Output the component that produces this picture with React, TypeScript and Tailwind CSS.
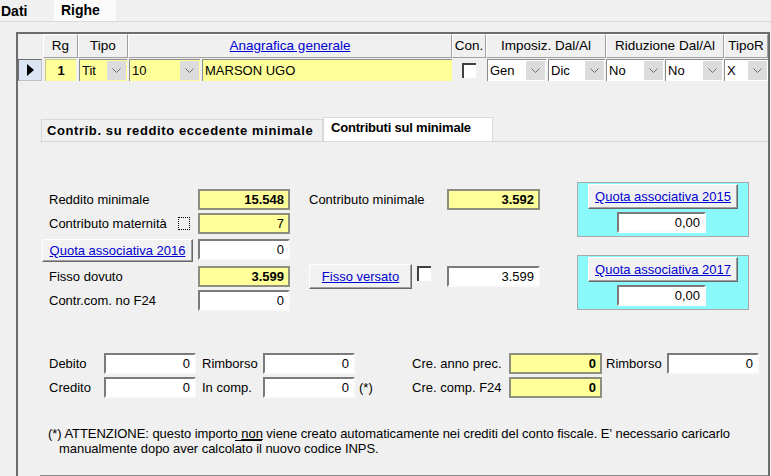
import clsx from "clsx";
import type { ReactNode } from "react";

function Chevron() {
  return (
    <svg width="9" height="5" viewBox="0 0 9 5" className="block">
      <path d="M0.5 0.5 L4.5 4.5 L8.5 0.5" fill="none" stroke="#6e6e6e" strokeWidth="1" />
    </svg>
  );
}

function Combo({ text, className, yellow }: { text: string; className: string; yellow?: boolean }) {
  return (
    <div className={clsx("flex h-[22px] border-l border-t border-[#8c8c8c]", yellow ? "bg-[#ffff99]" : "bg-white", className)}>
      <span className="flex-1 pl-[2px] leading-[21px]">{text}</span>
      <span className="my-[1px] mr-[1px] flex w-[19px] items-center justify-center bg-[#dcdcdc]">
        <Chevron />
      </span>
    </div>
  );
}

function Field({
  value,
  className,
  yellow,
  bold,
}: {
  value: string;
  className: string;
  yellow?: boolean;
  bold?: boolean;
}) {
  return (
    <div
      className={clsx(
        "flex h-[21px] shrink-0 items-center justify-end border-2 pr-[4px] leading-none",
        yellow
          ? "border-[#8e8e7e] bg-[#ffff99]"
          : "border-t-[#7b7b7b] border-l-[#7b7b7b] border-r-[#fafafa] border-b-[#fafafa] bg-white",
        bold && "font-bold",
        className,
      )}
    >
      {value}
    </div>
  );
}

function LinkButton({ children, className }: { children: ReactNode; className: string }) {
  return (
    <button
      type="button"
      className={clsx(
        "flex shrink-0 items-center justify-center border border-t-white border-l-white border-r-[#696969] border-b-[#696969] bg-[#f2f2f2] text-[#0000d0] underline shadow-[inset_-1px_-1px_0_#a0a0a0]",
        className,
      )}
    >
      {children}
    </button>
  );
}

function SunkenCheck({ className }: { className?: string }) {
  return <span className={clsx("block h-[15px] w-[14px] shrink-0 border-l-2 border-t-2 border-[#404040] bg-white", className)} />;
}

function HeadCell({ children, className }: { children?: ReactNode; className: string }) {
  return (
    <div
      className={clsx(
        "flex h-[24px] items-center justify-center border border-t-white border-l-white border-r-[#a0a0a0] border-b-[#a0a0a0] text-[13.5px]",
        className,
      )}
    >
      {children}
    </div>
  );
}

function Label({ children, className }: { children: ReactNode; className: string }) {
  return <div className={clsx("shrink-0 whitespace-nowrap leading-[21px]", className)}>{children}</div>;
}

function QuotaBox({ year, className }: { year: string; className?: string }) {
  return (
    <div className={clsx("flex h-[55px] w-[172px] flex-col border border-[#a8a8a8] bg-[#8af9f9]", className)}>
      <LinkButton className="ml-[10px] mt-[1px] h-[25px] w-[150px]">Quota associativa {year}</LinkButton>
      <Field value="0,00" className="ml-[39px] mt-[3px] w-[89px]" />
    </div>
  );
}

export default function App() {
  return (
    <div className="h-[476px] w-[771px] overflow-hidden bg-[#f0f0f0] font-['Liberation_Sans',Arial,sans-serif] text-[13px] text-black">
      {/* main tabs */}
      <div className="flex h-[22px] border-b border-[#dadada]">
        <div className="w-[54px] pl-[1px] text-[14px] font-bold leading-[22px]">Dati</div>
        <div className="w-[62px] bg-[#fbfbfb] pl-[7px] text-[14px] font-bold leading-[20px]">Righe</div>
      </div>

      {/* grid frame */}
      <div className="ml-[16px] mt-[10px] h-[460px] w-[754px] border-l-2 border-r-2 border-t-2 border-[#6d6d6d]">
        <div className="flex">
          <div className="h-[24px] w-[25px]" />
          <HeadCell className="w-[35px]">Rg</HeadCell>
          <HeadCell className="w-[50px]">Tipo</HeadCell>
          <HeadCell className="w-[324px]">
            <span className="text-[#0000d0] underline">Anagrafica generale</span>
          </HeadCell>
          <HeadCell className="w-[34px]">Con.</HeadCell>
          <HeadCell className="w-[120px]">Imposiz. Dal/Al</HeadCell>
          <HeadCell className="w-[118px]">Riduzione Dal/Al</HeadCell>
          <HeadCell className="w-[44px]">TipoR</HeadCell>
        </div>

        <div className="mt-[1px] flex h-[22px]">
          <div className="flex w-[24px] items-center justify-center border border-t-[#6d6d6d] border-l-[#6d6d6d] border-r-[#c0c0c0] border-b-[#c0c0c0] bg-[#dbe5f3]">
            <svg width="7" height="12" viewBox="0 0 7 12">
              <polygon points="0,0 7,6 0,12" fill="#000" />
            </svg>
          </div>
          <div className="ml-[3px] flex w-[31px] items-center justify-center border-l border-t border-[#c9c98a] bg-[#ffff99] font-bold">1</div>
          <Combo text="Tit" yellow className="ml-[3px] w-[48px]" />
          <Combo text="10" yellow className="ml-[2px] w-[71px]" />
          <div className="ml-[2px] w-[250px] border-l border-t border-[#8c8c8c] bg-[#ffff99] pl-[2px] leading-[21px]">MARSON UGO</div>
          <div className="flex w-[34px] items-center justify-center">
            <SunkenCheck />
          </div>
          <Combo text="Gen" className="ml-[1px] w-[59px]" />
          <Combo text="Dic" className="ml-[2px] w-[57px]" />
          <Combo text="No" className="ml-[1px] w-[58px]" />
          <Combo text="No" className="ml-[1px] w-[58px]" />
          <Combo text="X" className="ml-[1px] w-[44px]" />
        </div>

        {/* inner tabs */}
        <div className="ml-[23px] mt-[36px] flex h-[24px] items-end">
          <div className="h-[22px] w-[282px] whitespace-nowrap border border-b-0 border-[#d9d9d9] pl-[5px] font-bold leading-[21px] tracking-[0.6px]">
            Contrib. su reddito eccedente minimale
          </div>
          <div className="h-[24px] w-[170px] whitespace-nowrap border border-b-0 border-[#d9d9d9] bg-white pl-[7px] font-bold leading-[20px] tracking-[-0.2px]">
            Contributi sul minimale
          </div>
        </div>

        <div className="ml-[22px] h-[336px] w-[728px] border-b-2 border-t border-b-[#8a8a8a] border-t-[#d9d9d9]">
          {/* upper block */}
          <div className="flex h-[171px] pt-[40px]">
            <div className="mt-[7px] w-[500px] pl-[2px]">
              <div className="flex h-[24px] items-start">
                <Label className="w-[156px] pl-[7px]">Reddito minimale</Label>
                <Field value="15.548" yellow bold className="w-[92px]" />
                <Label className="ml-[19px] w-[138px]">Contributo minimale</Label>
                <Field value="3.592" yellow bold className="w-[93px]" />
              </div>
              <div className="flex h-[26px] items-start">
                <div className="flex w-[156px] shrink-0 items-center justify-between pl-[7px] pr-[8px] leading-[21px]">
                  <span>Contributo maternità</span>
                  <span className="block h-[13px] w-[12px] border border-dotted border-black" />
                </div>
                <Field value="7" yellow className="w-[92px]" />
              </div>
              <div className="flex h-[25px] items-start">
                <LinkButton className="h-[23px] w-[151px]">Quota associativa 2016</LinkButton>
                <Field value="0" className="ml-[5px] w-[92px]" />
              </div>
              <div className="flex h-[26px] items-start">
                <Label className="mt-[2px] w-[156px] pl-[7px]">Fisso dovuto</Label>
                <Field value="3.599" yellow bold className="mt-[2px] w-[92px]" />
                <LinkButton className="ml-[19px] h-[25px] w-[103px]">Fisso versato</LinkButton>
                <SunkenCheck className="ml-[5px] mt-[2px]" />
                <Field value="3.599" className="ml-[16px] mt-[2px] w-[93px]" />
              </div>
              <div className="flex h-[24px] items-start">
                <Label className="w-[156px] pl-[7px]">Contr.com. no F24</Label>
                <Field value="0" className="w-[92px]" />
              </div>
            </div>
            <div className="ml-[37px]">
              <QuotaBox year="2015" />
              <QuotaBox year="2017" className="mt-[18px]" />
            </div>
          </div>

          {/* lower block */}
          <div className="mt-[40px] pl-[9px]">
            <div className="flex h-[24px] items-start">
              <Label className="w-[55px]">Debito</Label>
              <Field value="0" className="w-[92px]" />
              <Label className="ml-[6px] w-[61px]">Rimborso</Label>
              <Field value="0" className="w-[92px]" />
              <Label className="w-[57px] pl-[4px]">{""}</Label>
              <Label className="w-[97px]">Cre. anno prec.</Label>
              <Field value="0" yellow bold className="w-[93px]" />
              <Label className="ml-[4px] w-[61px]">Rimborso</Label>
              <Field value="0" className="w-[92px]" />
            </div>
            <div className="flex h-[24px] items-start">
              <Label className="w-[55px]">Credito</Label>
              <Field value="0" className="w-[92px]" />
              <Label className="ml-[6px] w-[61px]">In comp.</Label>
              <Field value="0" className="w-[92px]" />
              <Label className="w-[57px] pl-[4px]">(*)</Label>
              <Label className="w-[97px]">Cre. comp. F24</Label>
              <Field value="0" yellow bold className="w-[93px]" />
            </div>
          </div>

          {/* footnote */}
          <div className="mt-[25px] whitespace-nowrap leading-[15px] tracking-[-0.05px]">
            <div className="pl-[8px]">
              (*) ATTENZIONE: questo importo <span className="underline">non</span> viene creato automaticamente nei
              crediti del conto fiscale. E' necessario caricarlo
            </div>
            <div className="pl-[19px]">
              manualmente dopo aver calcol<span className="border-t border-black">ato il</span> nuovo codice INPS.
            </div>
          </div>
        </div>
      </div>
    </div>
  );
}
